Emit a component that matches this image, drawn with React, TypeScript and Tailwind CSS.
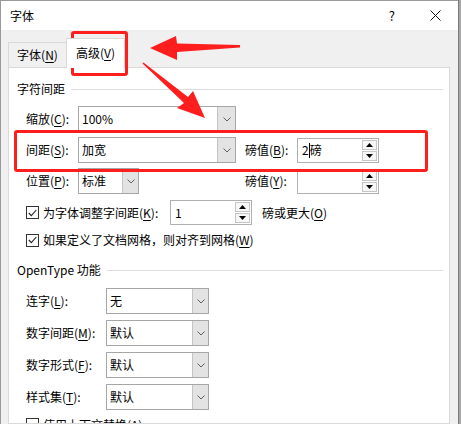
import React from "react";

function Chevron() {
  return (
    <svg width="8" height="5" viewBox="0 0 8 5" fill="none">
      <path d="M0.5 0.5 L4 4 L7.5 0.5" stroke="#606060" strokeWidth="1" />
    </svg>
  );
}

function Combo({ value, width, btn }: { value: string; width: string; btn: string }) {
  return (
    <div className={`flex h-[26px] shrink-0 border border-[#a6a6a6] bg-white ${width}`}>
      <div className="flex flex-1 items-center pl-[3px]">{value}</div>
      <div className={`flex items-center justify-center bg-[#e3e3e3] border-l border-[#c4c4c4] ${btn}`}>
        <Chevron />
      </div>
    </div>
  );
}

function Spin({ children }: { children?: React.ReactNode }) {
  return (
    <div className="flex h-[25px] w-[82px] shrink-0 border border-[#b0b0b0] bg-white">
      <div className="flex flex-1 items-center pl-[4px]">{children}</div>
      <div className="flex flex-col gap-px py-[1px] pr-[1px]">
        <div className="flex h-[11px] w-[15px] items-center justify-center border border-[#c6c6c6] bg-[#f7f7f7]">
          <svg width="7" height="4" viewBox="0 0 7 4"><path d="M0 4 L3.5 0 L7 4Z" fill="#000" /></svg>
        </div>
        <div className="flex h-[11px] w-[15px] items-center justify-center border border-[#c6c6c6] bg-[#f7f7f7]">
          <svg width="7" height="4" viewBox="0 0 7 4"><path d="M0 0 L3.5 4 L7 0Z" fill="#000" /></svg>
        </div>
      </div>
    </div>
  );
}

function Check({ checked }: { checked: boolean }) {
  return (
    <div className="flex h-[13px] w-[13px] shrink-0 items-center justify-center border border-[#333333] bg-white">
      {checked && (
        <svg width="9" height="8" viewBox="0 0 9 8" fill="none">
          <path d="M0.8 4 L3.3 6.6 L8.3 1" stroke="#222" strokeWidth="1.1" />
        </svg>
      )}
    </div>
  );
}

function Acc({ label, k }: { label: string; k: string }) {
  return (
    <span className="whitespace-nowrap">
      {label}(<u className="underline-offset-2">{k}</u>)
    </span>
  );
}

function GroupHeader({ title }: { title: string }) {
  return (
    <div className="flex shrink-0 items-center">
      <span className="whitespace-nowrap">{title}</span>
      <div className="ml-[6px] h-px flex-1 bg-[#dcdcdc]" />
    </div>
  );
}

export default function App() {
  const openType = [
    { label: "连字", k: "L", value: "无" },
    { label: "数字间距", k: "M", value: "默认" },
    { label: "数字形式", k: "F", value: "默认" },
    { label: "样式集", k: "T", value: "默认" },
  ];

  return (
    <div className="relative flex h-[424px] w-[461px] overflow-hidden bg-[#f0f0f0] font-['Noto_Sans_CJK_SC','Noto_Sans',sans-serif] text-[12px] leading-none text-black">
      {/* Dialog */}
      <div className="flex min-h-0 w-[458px] flex-col border-l border-t border-[#9a9a9a]">
        {/* Title bar */}
        <div className="flex h-[29px] shrink-0 items-center bg-white pl-[9px]">
          <span>字体</span>
          <span className="ml-auto mr-[35px] text-[13px]">?</span>
          <svg className="mr-[17px]" width="11" height="11" viewBox="0 0 11 11" fill="none">
            <path d="M0.5 0.5 L10.5 10.5 M10.5 0.5 L0.5 10.5" stroke="#111" strokeWidth="1" />
          </svg>
        </div>

        {/* Body */}
        <div className="flex min-h-0 flex-1 flex-col px-[7px] pt-[8px]">
          {/* Tabs */}
          <div className="flex shrink-0 items-end">
            <div className="flex h-[25px] w-[59px] items-center justify-center border border-b-0 border-[#d9d9d9] bg-[#f0f0f0]">
              <Acc label="字体" k="N" />
            </div>
            <div className="relative z-10 -mb-px -ml-px flex h-[30px] w-[59px] items-center justify-center border border-b-0 border-[#d9d9d9] bg-white pb-[2px]">
              <Acc label="高级" k="V" />
            </div>
          </div>

          {/* Panel */}
          <div className="flex min-h-0 w-[442px] flex-1 flex-col overflow-hidden border border-[#d9d9d9] bg-white pl-[8px] pr-[6px] pt-[15px]">
            <GroupHeader title="字符间距" />

            <div className="mt-[11px] flex shrink-0 flex-col gap-[5px] pl-[9px]">
              <div className="flex items-center">
                <div className="w-[52px]"><Acc label="缩放" k="C" />:</div>
                <Combo value="100%" width="w-[158px]" btn="w-[18px]" />
              </div>
              <div className="flex items-center">
                <div className="w-[52px]"><Acc label="间距" k="S" />:</div>
                <Combo value="加宽" width="w-[158px]" btn="w-[18px]" />
                <div className="ml-[9px] w-[52px]"><Acc label="磅值" k="B" />:</div>
                <Spin>
                  <span>2</span>
                  <span className="h-[15px] w-px bg-black" />
                  <span>磅</span>
                </Spin>
              </div>
              <div className="flex items-center">
                <div className="w-[52px]"><Acc label="位置" k="P" />:</div>
                <div className="w-[158px]">
                  <Combo value="标准" width="w-[61px]" btn="w-[16px]" />
                </div>
                <div className="ml-[9px] w-[52px]"><Acc label="磅值" k="Y" />:</div>
                <Spin />
              </div>
            </div>

            <div className="mt-[6px] flex h-[25px] shrink-0 items-center pl-[9px]">
              <div className="flex w-[144px] items-center gap-[4px]">
                <Check checked />
                <span className="whitespace-nowrap">
                  为字体调整字间距(<u className="underline-offset-2">K</u>):
                </span>
              </div>
              <Spin>1</Spin>
              <span className="ml-[10px] whitespace-nowrap">
                磅或更大(<u className="underline-offset-2">O</u>)
              </span>
            </div>

            <div className="mt-[8px] flex h-[14px] shrink-0 items-center gap-[4px] pl-[9px]">
              <Check checked />
              <span className="whitespace-nowrap">
                如果定义了文档网格，则对齐到网格(<u className="underline-offset-2">W</u>)
              </span>
            </div>

            <div className="mt-[17px] shrink-0">
              <GroupHeader title="OpenType 功能" />
            </div>

            <div className="mt-[12px] flex shrink-0 flex-col gap-[6px] pl-[9px]">
              {openType.map((row) => (
                <div key={row.k} className="flex items-center">
                  <div className="w-[80px]"><Acc label={row.label} k={row.k} />:</div>
                  <Combo value={row.value} width="w-[103px]" btn="w-[16px]" />
                </div>
              ))}
            </div>

            <div className="mt-[8px] flex shrink-0 items-center gap-[4px] pl-[9px]">
              <Check checked={false} />
              <span className="whitespace-nowrap">
                使用上下文替换(<u className="underline-offset-2">A</u>)
              </span>
            </div>
          </div>
        </div>
      </div>
      <div className="w-[3px] border-l border-[#7a7a7a] bg-[#a8a8a8]" />

      {/* Annotations */}
      <div className="pointer-events-none absolute left-[71px] top-[31px] h-[45px] w-[57px] rounded-[3px] border-[3px] border-[#ff1e1e]" />
      <div className="pointer-events-none absolute left-[14px] top-[130px] h-[42px] w-[414px] rounded-[3px] border-[3px] border-[#ff1e1e]" />
      <svg className="pointer-events-none absolute left-0 top-0" width="461" height="424" viewBox="0 0 461 424">
        <polygon
          points="150,48 176,36 177,43.5 240,45 240,47.5 177,52 177,60"
          fill="#ff1e1e"
        />
        <polygon
          points="142.5,63.6 143.5,62.4 188,97 193,91 205,118 177,108 184,103"
          fill="#ff1e1e"
        />
      </svg>
    </div>
  );
}
